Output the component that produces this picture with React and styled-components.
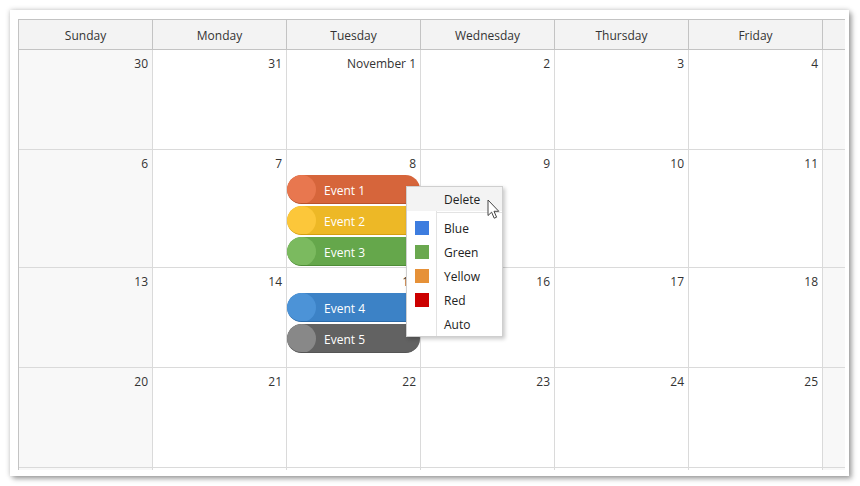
import React from "react";
import styled, { createGlobalStyle } from "styled-components";

const GlobalStyle = createGlobalStyle`
  html, body {
    margin: 0;
    background: #fff;
    font-family: "Segoe UI", "Open Sans", "Noto Sans", sans-serif;
    font-size: 12px;
    color: #333;
  }
`

// the last column is scrolled out of view, so it carries no labels
const days = ["Sunday", "Monday", "Tuesday", "Wednesday", "Thursday", "Friday", ""];

const weeks = [
  { height: 100, dates: ["30", "31", "November 1", "2", "3", "4", ""] },
  { height: 118, dates: ["6", "7", "8", "9", "10", "11", ""] },
  { height: 100, dates: ["13", "14", "15", "16", "17", "18", ""] },
  { height: 100, dates: ["20", "21", "22", "23", "24", "25", ""] },
  { height: 100, dates: ["", "", "", "", "", "", ""] },
]

// events keyed by "week-day"
const events = {
  "1-2": [
    { id: 1, text: "Event 1", bar: "#d6653b", dot: "#e8774f", edge: "#b8522c" },
    { id: 2, text: "Event 2", bar: "#edb826", dot: "#fcc73a", edge: "#d49f10" },
    { id: 3, text: "Event 3", bar: "#65a74b", dot: "#7bba5f", edge: "#4f8d37" },
  ],
  "2-2": [
    { id: 4, text: "Event 4", bar: "#3c82c6", dot: "#4c93d7", edge: "#2b6aa8" },
    { id: 5, text: "Event 5", bar: "#626262", dot: "#888888", edge: "#555555" },
  ],
}

const menuColors = [
  { name: "Blue", color: "#3d7ddf" },
  { name: "Green", color: "#6aa84f" },
  { name: "Yellow", color: "#e69138" },
  { name: "Red", color: "#cc0000" },
  { name: "Auto", color: null },
]

const Page = styled.div`
  padding: 10px;
`
const Card = styled.div`
  position: relative;
  width: 839px;
  height: 466px;
  box-sizing: border-box;
  padding: 9px 4px 6px 8px;
  background: #fff;
  box-shadow: 0 0 5px rgba(0, 0, 0, 0.22), 3px 3px 5px rgba(0, 0, 0, 0.3);
`
const Viewport = styled.div`
  width: 827px;
  height: 451px;
  overflow: hidden;
`
const Grid = styled.div`
  display: grid;
  grid-template-columns: repeat(7, 134px);
  width: max-content;
  border-top: 1px solid #c3c3c3;
  border-left: 1px solid #c3c3c3;
`
const HeaderCell = styled.div`
  height: 30px;
  box-sizing: border-box;
  padding-top: 1px;
  display: flex;
  align-items: center;
  justify-content: center;
  background: #f3f3f3;
  border-right: 1px solid #c3c3c3;
  border-bottom: 1px solid #c3c3c3;
  color: #333;
`
const DayCell = styled.div`
  height: ${p => p.$h}px;
  box-sizing: border-box;
  display: flex;
  flex-direction: column;
  background: ${p => (p.$weekend ? "#f8f8f8" : "#fff")};
  border-right: 1px solid #dadada;
  border-bottom: 1px solid #dadada;
`
const DayNumber = styled.div`
  text-align: right;
  line-height: 16px;
  min-height: 16px;
  padding: 6px 4px 0 0;
  color: #333;
`
const EventList = styled.div`
  display: flex;
  flex-direction: column;
  gap: 2px;
  margin-top: 3px;
`
const EventBar = styled.div`
  position: relative;
  height: 29px;
  box-sizing: border-box;
  display: flex;
  align-items: center;
  padding: 3px 0 0 37px;
  border-radius: 15px;
  background: ${p => p.$bar};
  border-bottom: 1px solid ${p => p.$edge};
  color: #fff;
  overflow: hidden;
  &::before {
    content: "";
    position: absolute;
    left: 0;
    top: 0;
    width: 29px;
    height: 29px;
    border-radius: 50%;
    background: ${p => p.$dot};
  }
`
const EventText = styled.span`
  position: relative;
`

const Menu = styled.div`
  position: absolute;
  left: 396px;
  top: 176px;
  width: 97px;
  box-sizing: border-box;
  background: #fff;
  border: 1px solid #cfcfcf;
  box-shadow: 2px 2px 4px rgba(0, 0, 0, 0.22);
  display: flex;
  flex-direction: column;
  color: #222;
`
const MenuItem = styled.div`
  position: relative;
  display: flex;
  align-items: center;
  height: 24px;
  background: ${p => (p.$active ? "#f3f3f3" : "transparent")};
  &::after {
    content: "";
    position: absolute;
    left: 29px;
    top: 0;
    bottom: 0;
    border-left: ${p => (p.$active ? "none" : "1px solid #e3e3e3")};
  }
`
const MenuIcon = styled.div`
  width: 30px;
  display: flex;
  justify-content: center;
`
const Swatch = styled.span`
  width: 14px;
  height: 14px;
  background: ${p => p.$color};
  margin-left: -1px;
`
const MenuLabel = styled.span`
  padding-left: 7px;
`
const MenuSeparator = styled.div`
  height: 5px;
  position: relative;
  &::before {
    content: "";
    position: absolute;
    left: 29px;
    top: 0;
    bottom: 0;
    border-left: 1px solid #e3e3e3;
  }
  &::after {
    content: "";
    position: absolute;
    left: 29px;
    right: 0;
    top: 1px;
    border-top: 1px solid #e3e3e3;
  }
`
const Pointer = styled.svg`
  position: absolute;
  left: 477px;
  top: 189px;
`

const App = () => {
  return (
    <>
      <GlobalStyle />
      <Page>
        <Card>
          <Viewport>
            <Grid>
              {days.map((d, i) => (
                <HeaderCell key={i}>{d}</HeaderCell>
              ))}
              {weeks.map((week, w) =>
                week.dates.map((date, d) => (
                  <DayCell key={`${w}-${d}`} $h={week.height} $weekend={d === 0 || d === 6}>
                    <DayNumber>{date}</DayNumber>
                    {events[`${w}-${d}`] && (
                      <EventList>
                        {events[`${w}-${d}`].map(ev => (
                          <EventBar key={ev.id} $bar={ev.bar} $dot={ev.dot} $edge={ev.edge}>
                            <EventText>{ev.text}</EventText>
                          </EventBar>
                        ))}
                      </EventList>
                    )}
                  </DayCell>
                ))
              )}
            </Grid>
          </Viewport>

          <Menu>
            <MenuItem $active>
              <MenuIcon />
              <MenuLabel>Delete</MenuLabel>
            </MenuItem>
            <MenuSeparator />
            {menuColors.map(item => (
              <MenuItem key={item.name}>
                <MenuIcon>{item.color && <Swatch $color={item.color} />}</MenuIcon>
                <MenuLabel>{item.name}</MenuLabel>
              </MenuItem>
            ))}
          </Menu>

          <Pointer width="14" height="21" viewBox="0 0 14 21">
            <path
              d="M1 1 L1 16.5 L4.6 13.2 L7.2 19.2 L9.6 18.2 L7 12.3 L11.8 12.3 Z"
              fill="#fff" stroke="#444" strokeWidth="1" strokeLinejoin="round" />
          </Pointer>
        </Card>
      </Page>
    </>
  )
}

export default App;
